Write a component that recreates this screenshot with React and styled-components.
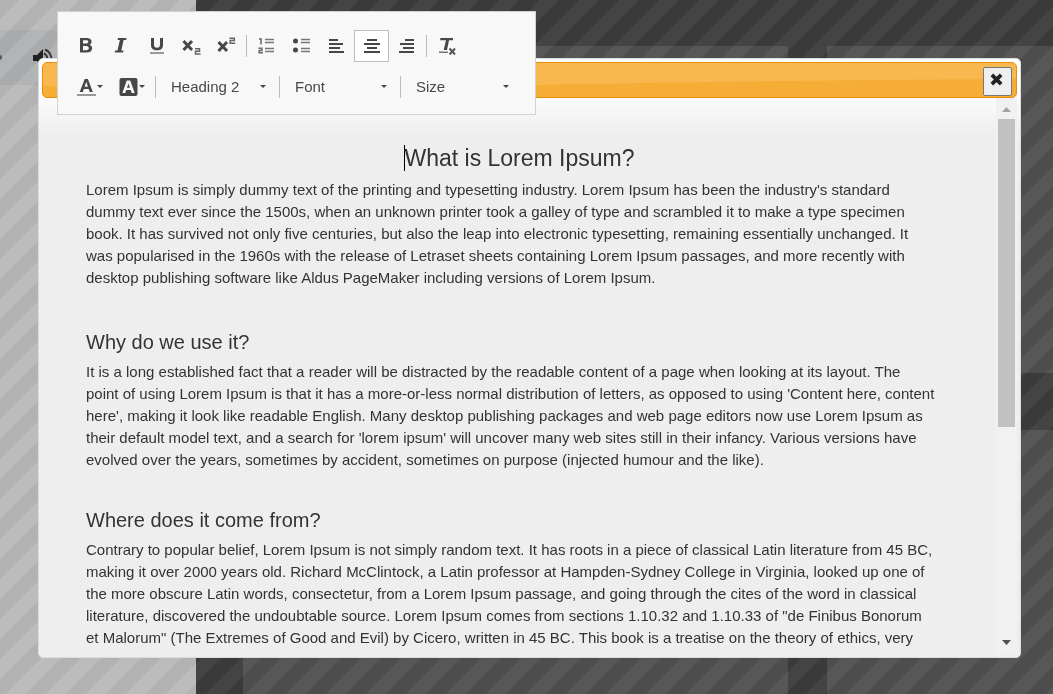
import React from 'react';
import styled, {createGlobalStyle} from 'styled-components';

const sections = [
    {
        title: 'What is Lorem Ipsum?',
        main: true,
        text: "Lorem Ipsum is simply dummy text of the printing and typesetting industry. Lorem Ipsum has been the industry's standard dummy text ever since the 1500s, when an unknown printer took a galley of type and scrambled it to make a type specimen book. It has survived not only five centuries, but also the leap into electronic typesetting, remaining essentially unchanged. It was popularised in the 1960s with the release of Letraset sheets containing Lorem Ipsum passages, and more recently with desktop publishing software like Aldus PageMaker including versions of Lorem Ipsum.",
    },
    {
        title: 'Why do we use it?',
        text: "It is a long established fact that a reader will be distracted by the readable content of a page when looking at its layout. The point of using Lorem Ipsum is that it has a more-or-less normal distribution of letters, as opposed to using 'Content here, content here', making it look like readable English. Many desktop publishing packages and web page editors now use Lorem Ipsum as their default model text, and a search for 'lorem ipsum' will uncover many web sites still in their infancy. Various versions have evolved over the years, sometimes by accident, sometimes on purpose (injected humour and the like).",
    },
    {
        title: 'Where does it come from?',
        text: 'Contrary to popular belief, Lorem Ipsum is not simply random text. It has roots in a piece of classical Latin literature from 45 BC, making it over 2000 years old. Richard McClintock, a Latin professor at Hampden-Sydney College in Virginia, looked up one of the more obscure Latin words, consectetur, from a Lorem Ipsum passage, and going through the cites of the word in classical literature, discovered the undoubtable source. Lorem Ipsum comes from sections 1.10.32 and 1.10.33 of "de Finibus Bonorum et Malorum" (The Extremes of Good and Evil) by Cicero, written in 45 BC. This book is a treatise on the theory of ethics, very',
    },
];

const icons = {
    bold: <path fill="#474747" fillRule="evenodd" d="M3 2h6.500c3.300 0 5 1.300 5 3.700 0 1.600-.8 2.700-2.300 3.100 1.900.4 2.900 1.600 2.900 3.400 0 2.800-2 4.300-5.400 4.300H3zM6 4.200v3.400h2.900c1.500 0 2.400-.6 2.400-1.800S10.500 4.200 9 4.200zM6 9.900v4.300h3.300c1.600 0 2.500-.8 2.500-2.200s-1-2.100-2.700-2.100z"/>,
    italic: <path fill="#474747" d="M6 2h8.500l-.4 2h-2.500L9.300 14.500h2.200l-.4 2H2.700l.4-2h2.400L7.900 4H5.600z"/>,
    underline: <>
        <path fill="#474747" d="M4 2h3v6.700c0 2 1 3 3 3s3-1 3-3V2h3v6.900c0 3.500-2 5.300-6 5.300s-6-1.800-6-5.300z"/>
        <path fill="#999" d="M3 16h14v2H3z"/>
    </>,
    sub: <>
        <path stroke="#474747" strokeWidth="3" fill="none" d="M1.500 5l8.500 9M10 5l-8.500 9"/>
        <path stroke="#666" strokeWidth="1.500" fill="none" d="M13 12.700h4.500v2.600h-4V18h5"/>
    </>,
    sup: <>
        <path stroke="#474747" strokeWidth="3" fill="none" d="M1.500 6l8.500 9M10 6l-8.500 9"/>
        <path stroke="#666" strokeWidth="1.500" fill="none" d="M12.500 2.200h4.800v2.400h-4.100v2.700h5"/>
    </>,
    ordered: <>
        <path stroke="#666" strokeWidth="1.500" fill="none" d="M2 3h2v5.500M1.500 12.200h3.300v2.300H2.200v2.300H6"/>
        <path stroke="#777" strokeWidth="1.500" d="M8 3.500h9M8 6.500h9M8 12.500h9M8 15.500h9"/>
    </>,
    bullets: <>
        <path fill="#474747" d="M1 5a2.500 2.500 0 1 0 5 0a2.500 2.500 0 1 0-5 0zM1 14a2.500 2.500 0 1 0 5 0a2.500 2.500 0 1 0-5 0z"/>
        <path stroke="#777" strokeWidth="1.500" d="M9 3.500h9M9 6.500h9M9 12.500h9M9 15.500h9"/>
    </>,
    left: <path stroke="#474747" strokeWidth="2" d="M2 4h9M2 8h14M2 12h11M2 16h15"/>,
    center: <path stroke="#474747" strokeWidth="2" d="M5 4h10M2 8h16M5 12h10M2 16h16"/>,
    right: <path stroke="#474747" strokeWidth="2" d="M8 4h9M3 8h14M6 12h11M2 16h15"/>,
    clear: <>
        <path fill="#474747" d="M3.500 2H16v2.300h-4L10 14H6.700L9 4.300H3z"/>
        <path fill="#777" d="M2 15.500h9V17H2z"/>
        <path stroke="#555" strokeWidth="2" d="M12.500 12.500l5.500 6M18 12.500l-5.500 6"/>
    </>,
    color: <>
        <path fill="#474747" fillRule="evenodd" d="M7.700 2h3.200L15.800 15h-3.100l-1-2.900H6.800L5.800 15H2.700zM9.300 4.800L7.600 9.800h3.300z"/>
        <path fill="#999" d="M0 17h19v2H0z"/>
    </>,
    highlight: <path fill="#474747" fillRule="evenodd" d="M2.500 1h14q2 0 2 2v14q0 2-2 2h-14q-2 0-2-2V3q0-2 2-2zM7.800 3.500L3.300 16h3l1-2.900h4.400l1 2.900h3L11.200 3.500zM9.500 6.500l1.400 4.200H8z"/>,
};

const App = () => {
    return (
        <>
            <GlobalStyle/>
            <Page>
                <Sidebar>
                    <PlayerBar>
                        <Knob/>
                        <Speaker viewBox="0 0 20 18" aria-hidden="true">
                            <path fill="#2b2b2b" d="M0 6h4l6-6v18l-6-6H0z"/>
                            <path fill="none" stroke="#3a3a3a" strokeWidth="2" d="M11 4.500q3.500 1.500 3.500 7M12 .5q6.500 2.500 6.500 11"/>
                        </Speaker>
                    </PlayerBar>
                </Sidebar>
                <Board>
                    <Card/>
                    <Card/>
                    <Card/>
                    <Card/>
                </Board>
            </Page>
            <Stripes/>
            <Dialog role="dialog" aria-label="Text">
                <TitleBar>
                    <Gloss viewBox="0 0 100 34" preserveAspectRatio="none" aria-hidden="true">
                        <path fill="#f8b74f" d="M0 0h100v16Q75 17 50 22T0 23z"/>
                    </Gloss>
                    <CloseButton aria-label="Close">
                        <svg width="13" height="13" viewBox="0 0 14 14">
                            <path stroke="#222" strokeWidth="4" d="M2 2l10 10M12 2L2 12"/>
                        </svg>
                    </CloseButton>
                </TitleBar>
                <Body>
                    <Content>
                        {sections.map(cur => <Section key={cur.title} {...cur}/>)}
                    </Content>
                    <Rail>
                        <Arrow viewBox="0 0 9 5"><path fill="#a3a3a3" d="M0 5l4.500-5L9 5z"/></Arrow>
                        <Thumb/>
                        <Arrow viewBox="0 0 9 5"><path fill="#505050" d="M0 0h9L4.500 5z"/></Arrow>
                    </Rail>
                </Body>
            </Dialog>
            <Toolbar role="toolbar" aria-label="Formatting">
                <ToolRow>
                    <Tool name="bold"/>
                    <Tool name="italic"/>
                    <Tool name="underline"/>
                    <Tool name="sub"/>
                    <Tool name="sup"/>
                    <Divider/>
                    <Tool name="ordered"/>
                    <Tool name="bullets"/>
                    <Tool name="left"/>
                    <Tool name="center" active/>
                    <Tool name="right"/>
                    <Divider/>
                    <Tool name="clear"/>
                </ToolRow>
                <ToolRow>
                    <Tool name="color" menu/>
                    <Tool name="highlight" menu/>
                    <Divider/>
                    <Picker label="Paragraph format" value="Heading 2" width={119}/>
                    <Divider/>
                    <Picker label="Font name" value="Font" width={116}/>
                    <Divider/>
                    <Picker label="Font size" value="Size" width={117}/>
                </ToolRow>
            </Toolbar>
        </>
    );
};

export default App;

const Section = (props) => {
    const {title, text, main} = props;
    return (
        <section>
            {main ? <MainTitle><Caret/>{title}</MainTitle> : <SubTitle>{title}</SubTitle>}
            <Paragraph $main={main}>{text}</Paragraph>
        </section>
    );
};

const Tool = (props) => {
    const {name, active, menu} = props;
    return (
        <ToolButton aria-label={name} aria-pressed={!!active} $active={active} $menu={menu}>
            <svg width="19" height="19" viewBox="0 0 19 19">{icons[name]}</svg>
            {menu && <Chevron viewBox="0 0 6 3"><path fill="#474747" d="M0 0h6L3 3z"/></Chevron>}
        </ToolButton>
    );
};

const Picker = (props) => {
    const {label, value, width} = props;
    return (
        <PickerBox $width={width}>
            <select aria-label={label} defaultValue={value}>
                <option>{value}</option>
            </select>
            <Chevron viewBox="0 0 6 3"><path fill="#474747" d="M0 0h6L3 3z"/></Chevron>
        </PickerBox>
    );
};

const GlobalStyle = createGlobalStyle`
    * {
        box-sizing: border-box;
    }
    body {
        margin: 0;
        overflow: hidden;
        background: #444;
        color: #333;
        font-family: "Liberation Sans", Arial, sans-serif;
    }
`
const Page = styled.div`
    display: flex;
    min-height: 100vh;
`
const Sidebar = styled.aside`
    padding-top: 30px;
    width: 196px;
    background: #bcbcbc;
`
const PlayerBar = styled.div`
    display: flex;
    align-items: center;
    gap: 31px;
    height: 55px;
    background: #b2b4b6;
`
const Knob = styled.span`
    width: 2px;
    height: 5px;
    border-radius: 0 3px 3px 0;
    background: #666;
`
const Speaker = styled.svg`
    width: 20px;
    height: 18px;
`
const Board = styled.main`
    flex: 1;
    display: grid;
    grid-template-columns: 545px 1fr;
    grid-template-rows: 327px 1fr;
    gap: 57px 39px;
    padding: 46px 0 0 47px;
`
const Card = styled.div`
    background: #575757;
`
const Stripes = styled.div`
    position: fixed;
    inset: 0;
    mix-blend-mode: difference;
    background: linear-gradient(135deg, #0a0a0a 25%, #000 25%, #000 50%, #0a0a0a 50%, #0a0a0a 75%, #000 75%) 0 0 / 40px 40px;
`
const Dialog = styled.div`
    position: fixed;
    inset: 58px 32px 36px 38px;
    display: flex;
    flex-direction: column;
    padding: 3px;
    border: 1px solid #ddd;
    border-radius: 5px;
    background: #eee linear-gradient(#fff, #fff 28px, #eee 76px) no-repeat;
`
const TitleBar = styled.div`
    flex: none;
    display: grid;
    align-items: center;
    height: 36px;
    border: 1px solid #e78f08;
    border-radius: 5px;
    overflow: hidden;
    background: #f6ad35;
    > * {
        grid-area: 1 / 1;
    }
`
const Gloss = styled.svg`
    width: 100%;
    height: 34px;
`
const CloseButton = styled.button`
    justify-self: end;
    display: flex;
    justify-content: center;
    align-items: center;
    margin: 2px 4px 0 0;
    padding: 0 3px 3px 0;
    width: 29px;
    height: 29px;
    border: 1px solid #777;
    border-radius: 2px;
    background: #efefef;
`
const Body = styled.div`
    flex: 1;
    display: flex;
    min-height: 0;
`
const Content = styled.div`
    flex: 1;
    padding: 45px 43px 0 44px;
    overflow-y: auto;
    scrollbar-width: none;
`
const MainTitle = styled.h1`
    display: flex;
    justify-content: center;
    align-items: center;
    margin: 0 0 6px;
    font-size: 23px;
    line-height: 30px;
    font-weight: 400;
`
const Caret = styled.span`
    margin-right: -1px;
    width: 1px;
    height: 26px;
    background: #000;
`
const SubTitle = styled.h2`
    margin: 0 0 4px;
    font-size: 20px;
    line-height: 30px;
    font-weight: 400;
`
const Paragraph = styled.p`
    margin: 0 0 ${props => props.$main ? 38 : 34}px;
    padding-right: 17px;
    font-size: 15px;
    line-height: 22px;
`
const Rail = styled.div`
    display: flex;
    flex-direction: column;
    align-items: center;
    padding: 9px 0;
    width: 21px;
    background: #f1f1f1;
`
const Arrow = styled.svg`
    flex: none;
    width: 9px;
    height: 5px;
`
const Thumb = styled.div`
    margin: 7px 0 auto;
    width: 17px;
    height: 308px;
    background: #c1c1c1;
`
const Toolbar = styled.div`
    position: fixed;
    top: 11px;
    left: 57px;
    display: flex;
    flex-direction: column;
    gap: 8px;
    padding: 17px 11px 11px;
    width: 479px;
    border: 1px solid #d1d1d1;
    background: #f8f8f8;
`
const ToolRow = styled.div`
    display: flex;
    align-items: center;
    height: 33px;
`
const ToolButton = styled.button`
    display: flex;
    justify-content: center;
    align-items: center;
    gap: 1px;
    padding: 0;
    width: ${props => props.$menu ? 42 : 35}px;
    height: 32px;
    border: 1px solid ${props => props.$active ? '#bcbcbc' : 'transparent'};
    background: ${props => props.$active ? '#fff' : 'transparent'};
`
const Divider = styled.span`
    width: 1px;
    height: 22px;
    margin: 0 2px;
    background: #bcbcbc;
`
const PickerBox = styled.div`
    display: flex;
    align-items: center;
    padding: 0 11px 0 13px;
    width: ${props => props.$width}px;
    select {
        flex: 1;
        padding: 0;
        border: 0;
        appearance: none;
        background: none;
        color: #484848;
        font: 15px "Liberation Sans", Arial, sans-serif;
    }
`
const Chevron = styled.svg`
    flex: none;
    width: 6px;
    height: 3px;
`
